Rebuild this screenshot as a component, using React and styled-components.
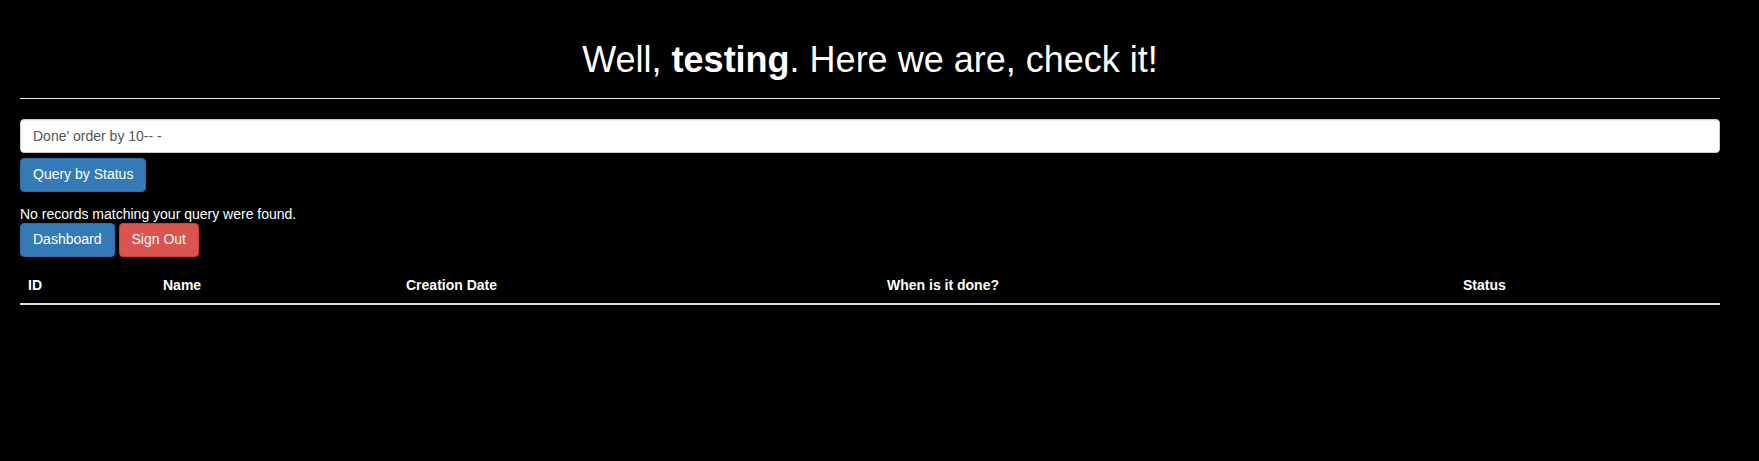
import React from "react";
import styled, { createGlobalStyle } from "styled-components";

const GlobalStyle = createGlobalStyle`
  html, body {
    margin: 0;
    padding: 0;
    background: #000;
  }
  body {
    font-family: "Liberation Sans", Arial, sans-serif;
    font-size: 14px;
    line-height: 1.42857;
    color: #fff;
  }
  * {
    box-sizing: border-box;
  }
`;

const columns = [
  { label: "ID", width: 135 },
  { label: "Name", width: 243 },
  { label: "Creation Date", width: 481 },
  { label: "When is it done?", width: 576 },
  { label: "Status", width: 265 },
];

function App() {
  return (
    <>
      <GlobalStyle />
      <Container>
        <Title>
          Well, <b>testing</b>. Here we are, check it!
        </Title>
        <Divider />
        <QueryForm>
          <Input defaultValue="Done' order by 10-- -" />
          <Button $variant="primary" type="button">
            Query by Status
          </Button>
        </QueryForm>
        <Message>No records matching your query were found.</Message>
        <Actions>
          <Button $variant="primary">Dashboard</Button>
          <Button $variant="danger">Sign Out</Button>
        </Actions>
        <Table>
          <thead>
            <tr>
              {columns.map((c) => (
                <Th key={c.label} $width={c.width}>
                  {c.label}
                </Th>
              ))}
            </tr>
          </thead>
          <tbody></tbody>
        </Table>
      </Container>
    </>
  );
}

export default App;

const Container = styled.div`
  width: 1700px;
  margin-left: 20px;
`;

const Title = styled.h1`
  margin: 40px 0 0;
  font-size: 36px;
  font-weight: 500;
  line-height: 1.1;
  text-align: center;
  color: #fff;
  b {
    font-weight: 700;
  }
`;

const Divider = styled.hr`
  margin: 18px 0 20px;
  border: 0;
  border-top: 1px solid #eee;
`;

const QueryForm = styled.form`
  display: flex;
  flex-direction: column;
  align-items: flex-start;
  gap: 5px;
  margin: 0;
`;

const Input = styled.input`
  display: block;
  width: 100%;
  height: 34px;
  padding: 6px 12px;
  font-family: inherit;
  font-size: 14px;
  color: #555;
  background: #fff;
  border: 1px solid #ccc;
  border-radius: 4px;
  box-shadow: inset 0 1px 1px rgba(0, 0, 0, 0.075);
  outline: none;
`;

const Button = styled.button`
  display: inline-block;
  height: 34px;
  padding: 6px 12px;
  font-family: inherit;
  font-size: 14px;
  line-height: 1.42857;
  color: #fff;
  border-radius: 4px;
  cursor: pointer;
  background: ${(p) => (p.$variant === "danger" ? "#d9534f" : "#337ab7")};
  border: 1px solid ${(p) => (p.$variant === "danger" ? "#d43f3a" : "#2e6da4")};
`;

const Message = styled.p`
  margin: 13px 0 0;
  line-height: 18px;
`;

const Actions = styled.div`
  display: flex;
  gap: 4px;
`;

const Table = styled.table`
  width: 100%;
  margin-top: 10px;
  border-collapse: collapse;
  border-spacing: 0;
`;

const Th = styled.th`
  width: ${(p) => p.$width}px;
  padding: 8px;
  text-align: left;
  font-weight: 700;
  line-height: 20px;
  border-bottom: 2px solid #ddd;
`;
